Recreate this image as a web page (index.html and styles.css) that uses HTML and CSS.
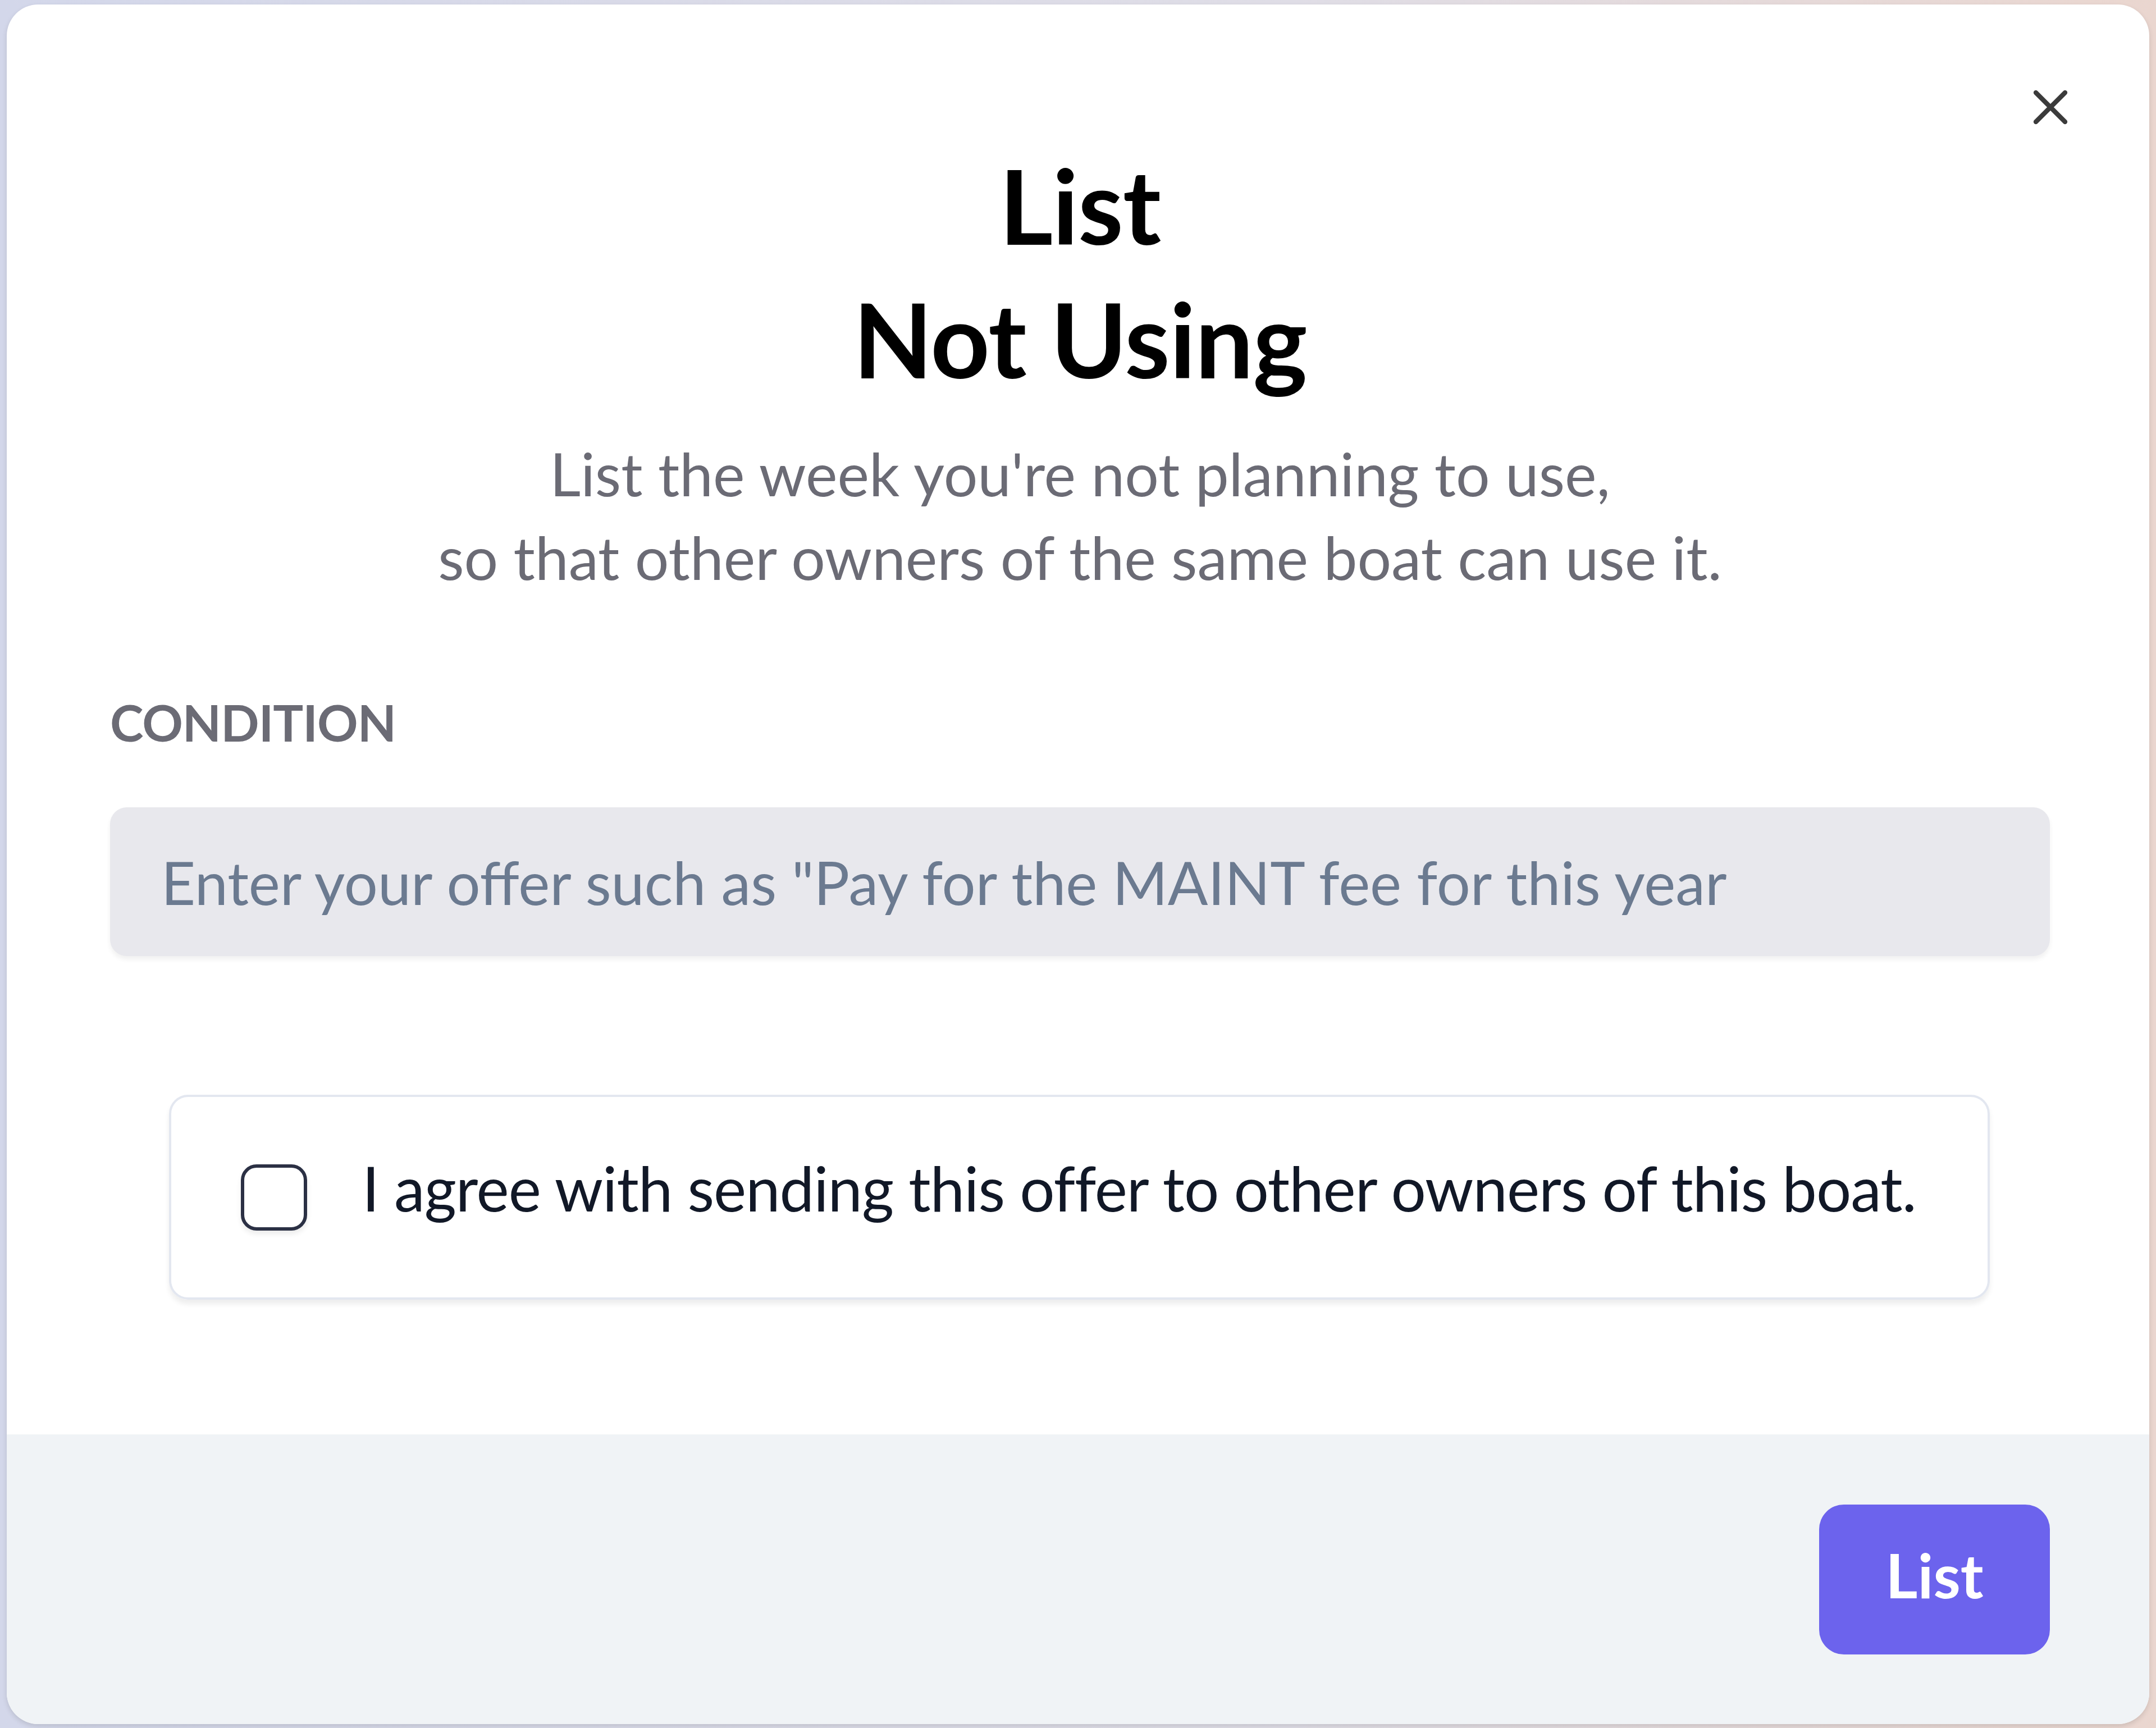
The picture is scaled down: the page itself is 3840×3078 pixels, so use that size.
FILE: index.html
```html
<!DOCTYPE html>
<html lang="en">
  <head>
    <meta charset="UTF-8" />
    <meta name="viewport" content="width=device-width, initial-scale=1.0" />
    <title>List Not Using</title>
    <link rel="stylesheet" href="styles.css">
  </head>
  <body>
    <div class="backdrop">
      <div class="modal">
        <!--lukkeknap oppe i hjoernet-->
        <button class="close-btn" aria-label="Close">
          <svg viewBox="0 0 24 24" width="80" height="80">
            <path d="M4.2 4.2 L19.8 19.8 M19.8 4.2 L4.2 19.8" stroke="#3b3b3b" stroke-width="2.5" stroke-linecap="round" fill="none" />
          </svg>
        </button>

        <div class="modal-body">
          <h2 class="title">List<br />Not Using</h2>
          <p class="subtitle">
            List the week you're not planning to use,<br />so that other owners of the same boat can use it.
          </p>

          <label class="field-label" for="offer">CONDITION</label>
          <input id="offer" class="offer-input" type="text" placeholder='Enter your offer such as "Pay for the MAINT fee for this year' />

          <label class="agree-card">
            <input type="checkbox" class="agree-box" />
            <span class="agree-text">I agree with sending this offer to other owners of this boat.</span>
          </label>
        </div>

        <div class="modal-footer">
          <button class="list-btn">List</button>
        </div>
      </div>
    </div>
  </body>
</html>
```

FILE: styles.css
```css
body {
  margin: 0;
  height: 3078px;
  background: linear-gradient(90deg, #d3d7ea, #dfdde6 60%, #ead6cf);
  font-family: Lato, "Open Sans", sans-serif;
}
.backdrop {
  box-sizing: border-box;
  height: 3078px;
  padding: 8px 12px 7px 12px;
}
.modal {
  position: relative;
  display: flex;
  flex-direction: column;
  height: 100%;
  background-color: #fff;
  border-radius: 56px;
  overflow: hidden;
  box-shadow: 0 4px 10px rgba(0, 0, 0, 0.12);
}
.close-btn {
  position: absolute;
  top: 143px;
  right: 136px;
  padding: 0;
  border: none;
  background: none;
  cursor: pointer;
}
.close-btn svg {
  display: block;
}
.modal-body {
  flex: 1;
  padding: 238px 177px 0 184px;
}
.title {
  margin: 0;
  text-align: center;
  font-size: 184px;
  line-height: 238px;
  font-weight: 700;
  letter-spacing: -1px;
  color: #000;
}
.subtitle {
  margin: 46px 0 0;
  text-align: center;
  font-size: 107px;
  line-height: 149px;
  color: #6b6b75;
}
.field-label {
  display: block;
  margin-top: 148px;
  font-size: 90px;
  line-height: 144px;
  font-weight: 700;
  letter-spacing: -1px;
  color: #6b6b75;
}
.offer-input {
  display: block;
  box-sizing: border-box;
  width: 100%;
  height: 265px;
  margin-top: 80px;
  padding: 0 91px;
  border: none;
  border-radius: 30px;
  background-color: #e8e8ed;
  font-family: inherit;
  font-size: 106px;
  color: #334155;
  box-shadow: 0 6px 8px rgba(0, 0, 0, 0.06);
}
.offer-input::placeholder {
  color: #6b7a90;
}
.agree-card {
  display: flex;
  align-items: center;
  gap: 98px;
  box-sizing: border-box;
  height: 365px;
  margin: 247px 107px 0 105px;
  padding: 0 124px;
  border: 4px solid #e3e7f0;
  border-radius: 34px;
  box-shadow: 0 8px 10px rgba(0, 0, 0, 0.07);
  font-size: 110px;
  letter-spacing: -1px;
  white-space: nowrap;
  color: #111827;
}
.agree-text {
  padding-bottom: 36px;
}
.agree-box {
  appearance: none;
  flex: none;
  width: 118px;
  height: 118px;
  margin: 0;
  border: 6px solid #2b3044;
  border-radius: 28px;
  background-color: #fff;
  box-shadow: 0 6px 10px rgba(0, 0, 0, 0.08);
}
.modal-footer {
  display: flex;
  justify-content: flex-end;
  align-items: center;
  box-sizing: border-box;
  height: 516px;
  padding-right: 177px;
  background-color: #f0f3f6;
}
.list-btn {
  width: 411px;
  height: 267px;
  padding: 0 0 18px;
  border: none;
  border-radius: 44px;
  background-color: #6c63ed;
  color: #fff;
  font-family: inherit;
  font-size: 110px;
  font-weight: 700;
  cursor: pointer;
}
```
